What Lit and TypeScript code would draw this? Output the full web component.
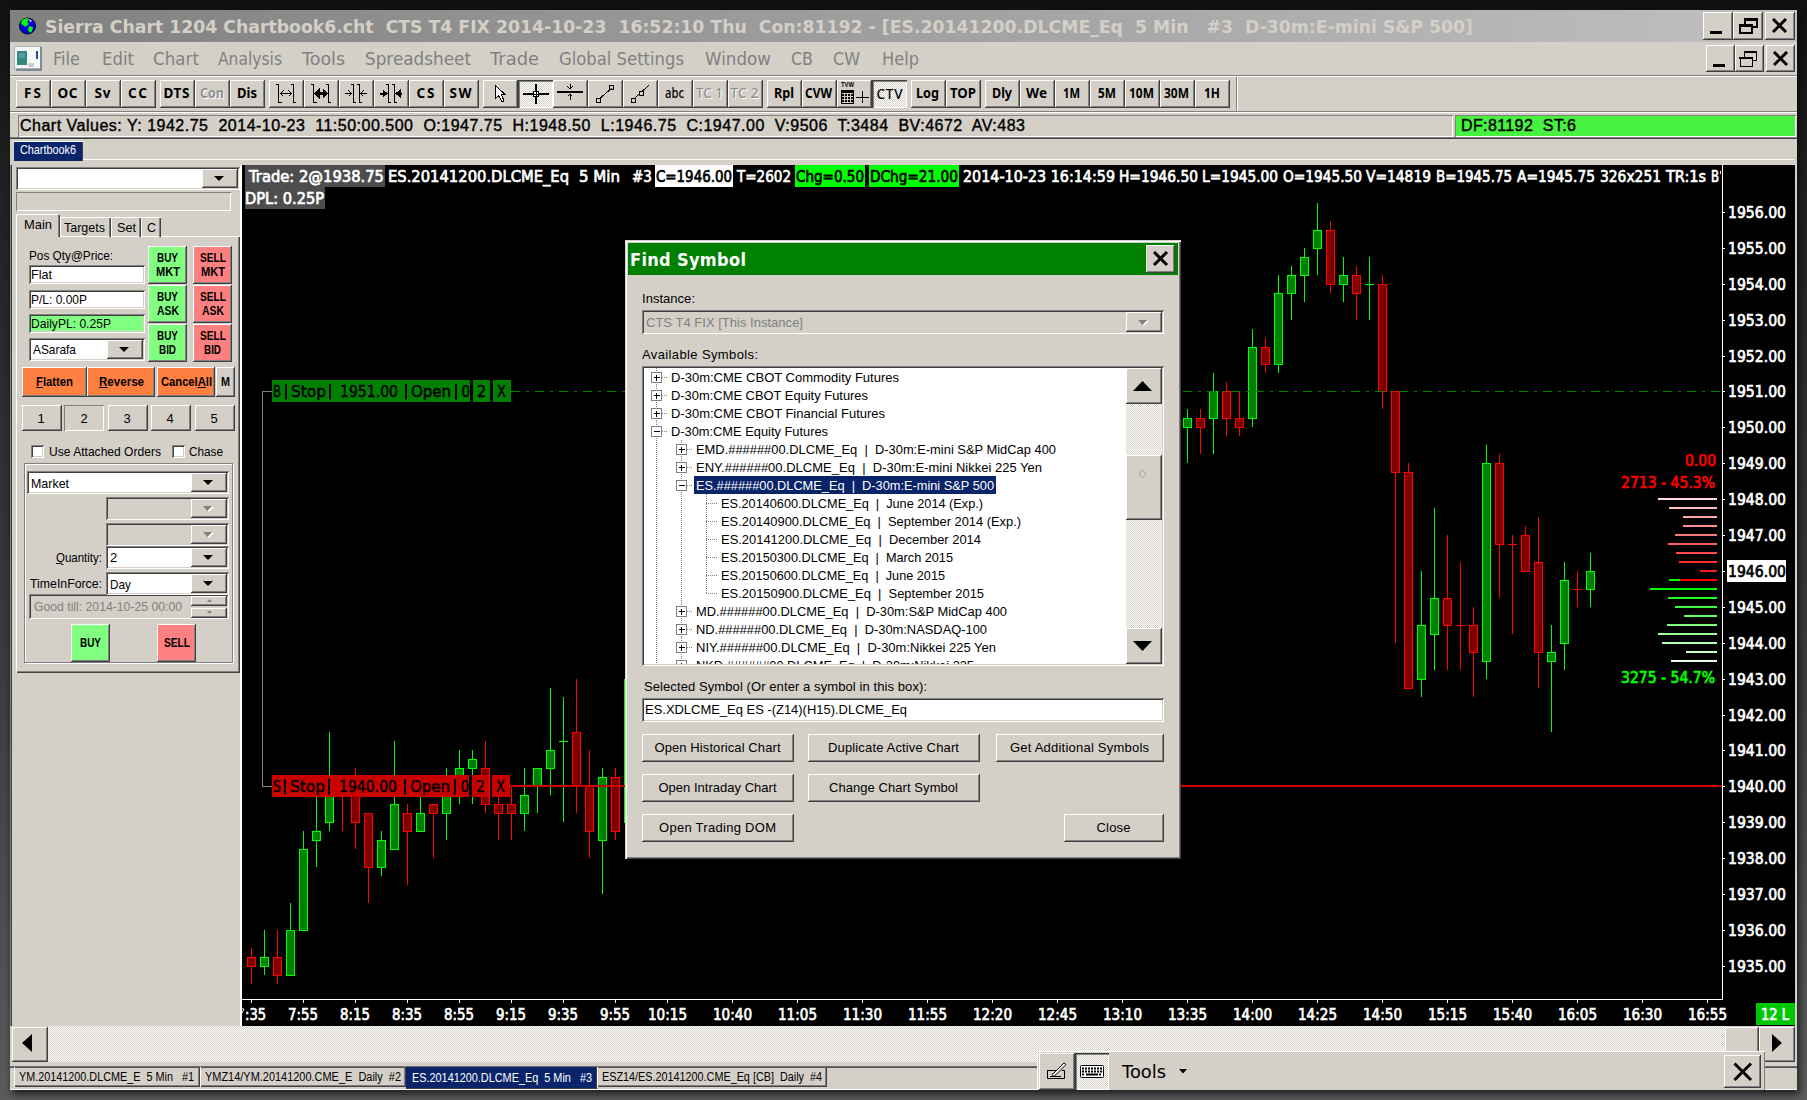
import { LitElement, html, svg, css, nothing } from "lit";
import { customElement, property } from "lit/decorators.js";
import { classMap } from "lit/directives/class-map.js";

/* Text run set to an exact advance width: tracked out when short, condensed when long. */
@customElement("fit-text")
class FitText extends LitElement {
  @property({ type: Number }) w = 0;
  static styles = css`
    :host { display: inline-block; white-space: pre; flex: none; text-align: left; }
    span { display: inline-block; white-space: pre; transform-origin: 0 50%; }
  `;
  render() {
    return html`<span><slot></slot></span>`;
  }
  firstUpdated() {
    const span = this.renderRoot.querySelector("span") as HTMLElement;
    const natural = span.getBoundingClientRect().width;
    const n = Math.max(1, (this.textContent || "").length - 1);
    if (this.w > 0) {
      if (natural > this.w) span.style.transform = `scaleX(${this.w / natural})`;
      else span.style.letterSpacing = `${(this.w - natural) / n}px`;
      this.style.width = `${this.w}px`;
    }
  }
}

const bevels = css`
  * { box-sizing: border-box; }
  .raised { background: #d4d0c8; box-shadow: inset -1px -1px #404040, inset 1px 1px #fff, inset -2px -2px #808080; }
  .sunken { box-shadow: inset 1px 1px #808080, inset -1px -1px #fff, inset 2px 2px #404040, inset -2px -2px #d4d0c8; }
  .hatch { background: conic-gradient(#fff 25%, #d4d0c8 0 50%, #fff 0 75%, #d4d0c8 0) 0 0 / 2px 2px; }
  .center { display: flex; align-items: center; justify-content: center; }
  svg { display: block; flex: none; }
`;

/* ---------- toolbar ---------- */
type Tool = { t?: string; w?: number; icon?: string; dim?: boolean; on?: boolean; light?: boolean };
const tools: Tool[][] = [
  [{ t: "FS", w: 17 }, { t: "OC", w: 20 }, { t: "Sv", w: 16 }, { t: "CC", w: 19 }],
  [{ t: "DTS", w: 26 }, { t: "Con", w: 24, dim: true }, { t: "Dis", w: 20 }],
  [{ icon: "wide" }, { icon: "widebold" }, { icon: "narrow" }, { icon: "narrowbold" }, { t: "CS", w: 18 }, { t: "SW", w: 22 }],
  [{ icon: "arrow" }, { icon: "cross", on: true }, { icon: "hline" }, { icon: "line" }, { icon: "ray" }, { t: "abc", w: 19, light: true }, { t: "TC 1", w: 27, dim: true, light: true }, { t: "TC 2", w: 28, dim: true, light: true }],
  [{ t: "Rpl", w: 20 }, { t: "CVW", w: 27 }, { icon: "tvw" }, { t: "CTV", w: 26, on: true, light: true }],
  [{ t: "Log", w: 23 }, { t: "TOP", w: 26 }],
  [{ t: "Dly", w: 20 }, { t: "We", w: 21 }, { t: "1M", w: 17 }, { t: "5M", w: 18 }, { t: "10M", w: 25 }, { t: "30M", w: 25 }, { t: "1H", w: 16 }],
];

const toolIcons: Record<string, unknown> = {
  wide: svg`<path d="M7 4.500H10M9.500 4V22M9 22.500H13M22 4.500H25M24.500 4V22M24 22.500H27M11 13.500H23"/><path d="M14.500 10.500L11.500 13.500L14.500 16.500M19.500 10.500L22.500 13.500L19.500 16.500"/>`,
  widebold: svg`<path d="M7 4.500H10M9.500 4V22M9 22.500H13M22 4.500H25M24.500 4V22M24 22.500H27"/><path fill="#000" d="M11 13.500L15 9.500V12.500H19V9.500L23 13.500L19 17.500V14.500H15V17.500Z"/>`,
  narrow: svg`<path d="M12 4.500H15M14.500 4V22M14 22.500H17M18 4.500H21M20.500 4V22M20 22.500H23M6 13.500H13M21 13.500H28"/><path d="M9.500 10.500L12.500 13.500L9.500 16.500M24.500 10.500L21.500 13.500L24.500 16.500"/>`,
  narrowbold: svg`<path d="M12 4.500H15M14.500 4V22M14 22.500H17M18 4.500H21M20.500 4V22M20 22.500H23"/><path stroke-width="2" d="M6 13.500H10M24 13.500H28"/><path fill="#000" d="M9 10L13 13.500L9 17ZM26 10L22 13.500L26 17Z"/>`,
  arrow: svg`<path fill="#fff" d="M12.500 5.500V18.500L15.500 15.500L19 22L21 21L18.500 14.500H22Z"/>`,
  cross: svg`<path stroke-width="2" d="M5 14H31M18 4V24"/><rect x="15.500" y="11.500" width="5" height="5" fill="#fff"/><path d="M18 11V17M15 14H21"/>`,
  hline: svg`<path stroke-width="2" d="M4 11.500H30"/><path d="M17 4V9M14.500 6.500L17 9L19.500 6.500M17 14V20M14.500 16.500L17 14L19.500 16.500"/>`,
  line: svg`<path d="M11 19L24 8"/><rect x="8.500" y="18.500" width="3.500" height="3.500"/><rect x="21.500" y="5.500" width="3.500" height="3.500"/>`,
  ray: svg`<path d="M11 19L26 5"/><rect x="8.500" y="18.500" width="3.500" height="3.500"/><rect x="16.500" y="11.500" width="3.500" height="3.500" fill="#d4d0c8"/>`,
  tvw: svg`<path stroke="none" fill="#000" d="M4 10H17V24H4Z"/><path stroke="#d4d0c8" d="M5 13.500H16M5 16.500H16M5 19.500H16M5 22.500H16M7.500 13V23M10.500 13V23M13.500 13V23"/><path d="M19 17H32M25.500 11V23"/>`,
};

@customElement("tool-bar")
class ToolBar extends LitElement {
  static styles = [bevels, css`
    :host { display: flex; gap: 4px; height: 34px; padding: 3px 0 4px 6px; background: #d4d0c8; font: bold 13.5px "Noto Sans", sans-serif; color: #000; }
    .group { display: flex; }
    .btn { width: 35px; height: 28px; padding: 0 2px 3px 0; position: relative; }
    .icon { padding: 0; align-items: flex-start; }
    .icon svg { fill: none; stroke: #000; shape-rendering: crispEdges; }
    .dim { color: #909090; text-shadow: 1px 1px #fff; }
    .light { font-weight: 500; }
    .on { background: conic-gradient(#fff 25%, #d4d0c8 0 50%, #fff 0 75%, #d4d0c8 0) 0 0 / 2px 2px; box-shadow: inset 1px 1px #404040, inset 2px 2px #808080, inset -1px -1px #fff; padding-right: 0; padding-bottom: 1px; }
    .tiny { position: absolute; left: 4px; top: 1px; font: bold 7px "Liberation Sans", sans-serif; }
    .end { width: 2px; height: 34px; margin: -3px 0 0 2px; background: linear-gradient(90deg, #808080 50%, #fff 50%); }
  `];
  render() {
    return html`${tools.map((g) => html`<div class="group">${g.map((b) => html`
      <div class=${classMap({ btn: true, raised: !b.on, on: !!b.on, center: true, dim: !!b.dim, light: !!b.light, icon: !!b.icon })}>
        ${b.icon === "tvw" ? html`<span class="tiny"><fit-text w="13">TVW</fit-text></span>` : nothing}
        ${b.icon ? html`<svg width="35" height="27">${toolIcons[b.icon]}</svg>` : html`<fit-text w=${b.w!}>${b.t}</fit-text>`}
      </div>`)}</div>`)}<div class="end"></div>`;
  }
}

/* ---------- trade panel ---------- */
@customElement("drop-box")
class DropBox extends LitElement {
  @property({ type: Boolean }) off = false;
  static styles = [bevels, css`
    :host { display: flex; height: 23px; background: #fff; padding: 2px; box-shadow: inset 1px 1px #808080, inset -1px -1px #fff, inset 2px 2px #404040, inset -2px -2px #d4d0c8; }
    :host([off]) { background: #d4d0c8; color: #808080; }
    .val { flex: 1; display: flex; align-items: center; padding-left: 2px; min-width: 0; }
    .btn { width: 36px; }
    svg { margin-right: 2px; }
  `];
  render() {
    return html`<div class="val"><slot></slot></div>
      <div class="btn raised center"><svg width="11" height="7">
        ${this.off ? svg`<path fill="#fff" d="M1 2H11L6 7Z"/><path fill="#808080" d="M0 1H9L4.500 6Z"/>` : svg`<path d="M0 1H10L5 6Z"/>`}
      </svg></div>`;
  }
}

@customElement("trade-panel")
class TradePanel extends LitElement {
  static styles = [bevels, css`
    :host { display: block; width: 231px; height: 861px; padding: 2px 0 0 5px; background: #d4d0c8; font: 13px "Liberation Sans", sans-serif; color: #000; border-left: 1px solid #808080; box-shadow: inset 1px 0 #404040, inset -1px 0 #fff; }
    .top { width: 224px; }
    .well { width: 215px; height: 19px; margin-top: 2px; box-shadow: inset 1px 1px #808080, inset -1px -1px #fff; }
    .tabs { display: flex; align-items: flex-end; height: 23px; margin-top: 3px; }
    .tab { height: 20px; box-shadow: inset 1px 1px #fff, inset -1px 0 #404040, inset -2px 0 #808080; display: flex; align-items: center; padding-left: 4px; }
    .tab.sel { height: 23px; width: 44px; padding: 0 0 2px 8px; border-radius: 2px 2px 0 0; }
    .body { width: 224px; height: 436px; box-shadow: inset 1px 0 #fff, inset -1px -1px #404040, inset -2px -2px #808080; padding: 10px 0 0 6px; }
    .body::before { content: ""; display: block; height: 1px; width: 180px; background: #fff; margin: -11px 0 10px 38px; }
    .pos { display: flex; padding-left: 7px; }
    .fields { width: 116px; margin-right: 3px; }
    .lab { height: 18px; display: flex; align-items: center; padding-bottom: 2px; }
    .in { height: 19px; background: #fff; display: flex; align-items: center; padding: 0 0 1px 2px; }
    .in.b { margin-top: 6px; } .in.c { margin-top: 5px; background: #80ff80; }
    .fields drop-box { margin-top: 5px; }
    .sq { display: grid; grid-template-columns: 39px 39px; column-gap: 6px; row-gap: 1px; grid-auto-rows: 38px; margin-top: -1px; }
    .big { display: flex; flex-direction: column; align-items: center; justify-content: center; line-height: 14px; font-weight: bold; font-size: 12.5px; }
    .buy { background: #80ff80; } .sell { background: #ff8080; }
    .row { display: flex; }
    .acts { margin-top: 5px; height: 30px; font-weight: bold; font-size: 12.5px; }
    .org { background: #ff8040; }
    .nums { margin-top: 8px; height: 26px; }
    .nums > div { width: 40px; padding-right: 2px; }
    .nums .down { box-shadow: inset 1px 1px #808080, inset -1px -1px #fff; padding-right: 0; }
    .checks { margin: 13px 0 0 9px; height: 14px; align-items: center; }
    .ck { width: 13px; height: 13px; background: #fff; }
    .group { width: 209px; height: 200px; margin: 5px 0 0 2px; border: 1px solid #808080; box-shadow: 1px 1px #fff, inset 1px 1px #fff; padding: 7px 3px 0 2px; }
    .group .r { display: flex; justify-content: flex-end; align-items: center; }
    .r drop-box { width: 123px; }
    .till { height: 25px; width: 200px; margin: -1px 0 0 2px; color: #808080; display: flex; justify-content: space-between; padding: 2px; align-items: center; }
    .spin { display: flex; flex-direction: column; gap: 2px; }
    .spin div { width: 36px; height: 10px; }
    .go { display: flex; gap: 47px; margin: 5px 0 0 44px; }
    .go div { width: 39px; height: 38px; }
  `];
  side(a: string, aw: number, b: string, bw: number, c: "buy" | "sell") {
    return html`<div class=${classMap({ big: true, raised: true, [c]: true })}><fit-text w=${aw}>${a}</fit-text><fit-text w=${bw}>${b}</fit-text></div>`;
  }
  render() {
    return html`
      <drop-box class="top"></drop-box>
      <div class="well"></div>
      <div class="tabs">
        <div class="tab sel"><fit-text w="28">Main</fit-text></div>
        <div class="tab" style="width:51px"><fit-text w="41">Targets</fit-text></div>
        <div class="tab" style="width:30px;padding-left:6px"><fit-text w="19">Set</fit-text></div>
        <div class="tab" style="width:20px;padding-left:6px"><fit-text w="9">C</fit-text></div>
      </div>
      <div class="body">
        <div class="pos">
          <div class="fields">
            <div class="lab"><fit-text w="84">Pos Qty@Price:</fit-text></div>
            <div class="in sunken"><fit-text w="21">Flat</fit-text></div>
            <div class="in b sunken"><fit-text w="56">P/L: 0.00P</fit-text></div>
            <div class="in c sunken"><fit-text w="80">DailyPL: 0.25P</fit-text></div>
            <drop-box><fit-text w="43">ASarafa</fit-text></drop-box>
          </div>
          <div class="sq">
            ${this.side("BUY", 21, "MKT", 24, "buy")}${this.side("SELL", 26, "MKT", 24, "sell")}
            ${this.side("BUY", 21, "ASK", 22, "buy")}${this.side("SELL", 26, "ASK", 22, "sell")}
            ${this.side("BUY", 21, "BID", 17, "buy")}${this.side("SELL", 26, "BID", 17, "sell")}
          </div>
        </div>
        <div class="row acts">
          <div class="raised org center" style="width:65px"><fit-text w="37"><u>F</u>latten</fit-text></div>
          <div class="raised org center" style="width:68px"><fit-text w="45"><u>R</u>everse</fit-text></div>
          <div class="raised org center" style="width:58px;margin-left:2px"><fit-text w="51">Cancel<u>A</u>ll</fit-text></div>
          <div class="raised center" style="width:19px;margin-left:1px"><fit-text w="9">M</fit-text></div>
        </div>
        <div class="row nums">
          ${[0, 2, 4, 3, 4].map((gap, i) => html`<div class=${classMap({ center: true, raised: i !== 1, down: i === 1 })} style="margin-left:${gap}px">${i + 1}</div>`)}
        </div>
        <div class="row checks">
          <div class="ck sunken"></div><fit-text w="112" style="margin-left:5px">Use Attached Orders</fit-text>
          <div class="ck sunken" style="margin-left:11px"></div><fit-text w="34" style="margin-left:4px">Chase</fit-text>
        </div>
        <div class="group">
          <drop-box><fit-text w="38" style="padding-top:1px">Market</fit-text></drop-box>
          <div class="r" style="margin-top:3px"><drop-box off></drop-box></div>
          <div class="r" style="margin-top:3px"><drop-box off></drop-box></div>
          <div class="r"><fit-text w="46" style="margin-right:4px"><u>Q</u>uantity:</fit-text><drop-box>2</drop-box></div>
          <div class="r" style="margin-top:3px"><fit-text w="72" style="margin-right:4px">TimeInForce:</fit-text><drop-box><fit-text w="21" style="padding-top:1px">Day</fit-text></drop-box></div>
          <div class="till sunken"><fit-text w="148" style="margin-left:3px">Good till: 2014-10-25 00:00</fit-text>
            <div class="spin">
              <div class="raised center"><svg width="5" height="3"><path fill="#808080" d="M0 3L2.500 0L5 3Z"/></svg></div>
              <div class="raised center"><svg width="5" height="3"><path fill="#808080" d="M0 0L2.500 3L5 0Z"/></svg></div>
            </div></div>
          <div class="go">
            <div class="big raised buy"><fit-text w="21">BUY</fit-text></div>
            <div class="big raised sell"><fit-text w="26">SELL</fit-text></div>
          </div>
        </div>
      </div>`;
  }
}

/* ---------- chart ---------- */
const TICK = 8.975;
const priceY = (p: number) => Math.round(391.4 + (1951 - p) * 4 * TICK);
const barX = (i: number) => 251 + 13 * i;

/* [bar index, up?, high, body top, body bottom, low] in quarter-point ticks from the base price */
type Bar = [number, number, number, number, number, number];
const early: Bar[] = [
  [0, 0, -18, -19, -20, -22], [1, 1, -16, -19, -20, -21], [2, 0, -16, -19, -21, -22], [3, 1, -13, -16, -21, -21],
  [4, 1, -5, -7, -16, -16], [5, 1, -1, -5, -6, -9], [6, 1, 6, 0, -4, -5], [7, 0, 0, 0, -1, -5],
  [8, 0, 2, 0, -4, -7], [9, 0, -3, -3, -9, -13], [10, 1, -5, -6, -9, -10], [11, 1, 5, -2, -7, -7],
  [12, 0, -2, -3, -5, -11], [13, 1, 0, -3, -5, -5], [14, 0, -2, -2, -3, -8], [15, 1, 2, 0, -3, -6],
  [16, 1, 4, 2, 0, -2], [17, 1, 4, 3, 2, -2], [18, 0, 5, 2, -2, -3], [19, 0, 0, -2, -3, -6],
  [20, 0, 0, -2, -3, -6], [21, 1, 2, -1, -3, -5], [22, 1, 2, 2, 0, -3], [23, 1, 11, 4, 2, -1],
  [24, 1, 10, 5, 5, -4], [25, 0, 12, 6, 0, -3], [26, 0, 4, 0, -5, -8], [27, 1, 2, 1, -6, -12],
  [28, 0, 2, 1, -5, -6], [29, 1, 12, 12, -4, -4],
];
const late: Bar[] = [
  [72, 1, -2, -3, -4, -8], [73, 0, -2, -3, -4, -7], [74, 1, 2, 0, -3, -7], [75, 0, 1, 0, -3, -5],
  [76, 0, 0, -3, -4, -5], [77, 1, 7, 5, -3, -4], [78, 0, 6, 5, 3, 2], [79, 1, 13, 11, 3, 2],
  [80, 1, 14, 13, 11, 8], [81, 1, 16, 15, 13, 10], [82, 1, 21, 18, 16, 13], [83, 0, 19, 18, 12, 11],
  [84, 1, 15, 13, 12, 10], [85, 0, 14, 13, 11, 8], [86, 1, 15, 12, 12, 8], [87, 0, 13, 12, 0, -2],
  [88, 0, 0, 0, -9, -28], [89, 0, -8, -9, -33, -33], [90, 1, -20, -26, -32, -34], [91, 1, -13, -23, -27, -31],
  [92, 0, -16, -23, -26, -31], [93, 0, -19, -26, -26, -31], [94, 0, -24, -26, -29, -34], [95, 1, -6, -8, -30, -32],
  [96, 0, -7, -8, -17, -23], [97, 0, -16, -17, -17, -27], [98, 0, -15, -16, -20, -20], [99, 0, -14, -19, -29, -33],
  [100, 1, -26, -29, -30, -38], [101, 1, -19, -21, -28, -31], [102, 0, -20, -22, -22, -24], [103, 1, -18, -20, -22, -24],
];
const times: [number, string][] = [
  [251, "7:35"], [303, "7:55"], [355, "8:15"], [407, "8:35"], [459, "8:55"], [511, "9:15"], [563, "9:35"], [615, "9:55"],
  [667, "10:15"], [732, "10:40"], [797, "11:05"], [862, "11:30"], [927, "11:55"], [992, "12:20"], [1057, "12:45"],
  [1122, "13:10"], [1187, "13:35"], [1252, "14:00"], [1317, "14:25"], [1382, "14:50"], [1447, "15:15"], [1512, "15:40"],
  [1577, "16:05"], [1642, "16:30"], [1707, "16:55"],
];
const depth: [number, string][] = [
  [1658, "#ffd8dc"], [1669, "#ffc0c0"], [1683, "#ffa8a8"], [1683, "#ff9090"], [1675, "#ff7878"], [1668, "#ff6060"],
  [1676, "#ff4848"], [1679, "#ff3030"], [1700, "#ff1818"], [1680, "#ff0000"], [1650, "#00ff00"], [1668, "#20f820"],
  [1675, "#40fc40"], [1684, "#60ff60"], [1667, "#80ff80"], [1658, "#98ff98"], [1662, "#b0ffb0"], [1686, "#c8ffc8"], [1671, "#e4ffe4"],
];

@customElement("price-chart")
class PriceChart extends LitElement {
  static styles = css`
    :host { display: block; width: 1554px; height: 861px; background: #000; }
    svg { display: block; }
    text { font: 15px "DejaVu Sans", sans-serif; fill: #fff; stroke: #fff; stroke-width: 0.7px; white-space: pre; }
    .ink { fill: #000; stroke: #000; }
    .red { fill: #f00; stroke: #f00; }
    .grn { fill: #0f0; stroke: #0f0; }
    .thin { stroke-width: 0.5px; }
    g { shape-rendering: crispEdges; }
  `;
  bar(base: number, [i, up, h, t, b, l]: Bar) {
    const y = (k: number) => priceY(base + k / 4);
    const x = barX(i);
    const line = up ? "#00ff00" : "#ff0000";
    return svg`<rect x=${x} y=${y(h)} width="1" height=${y(l) - y(h)} fill=${line}/>
      ${t === b ? svg`<rect x=${x - 4} y=${y(t)} width="9" height="1" fill=${line}/>`
        : svg`<rect x=${x - 3.5} y=${y(t) + 0.5} width="8" height=${y(b) - y(t)} fill=${up ? "#008000" : "#800000"} stroke=${line}/>`}`;
  }
  t(x1: number, x2: number, y: number, s: string, cls = "") {
    return svg`<text class=${cls} x=${x1} y=${y} textLength=${x2 - x1} lengthAdjust="spacingAndGlyphs">${s}</text>`;
  }
  order(y: number, dx: number, color: string, side: string, price: string) {
    const base = y + 5.5;
    return svg`<g fill=${color}><rect x="272" y=${y - 11} width=${198 + dx} height="22"/><rect x=${473 + dx} y=${y - 11} width="17" height="22"/><rect x=${493 + dx} y=${y - 11} width="18" height="22"/></g>
      ${this.t(273, 281, base, side, "ink thin")}
      <path d="M${286 + dx} ${y - 7}v15.500M${330 + dx} ${y - 7}v15.500M${406 + dx} ${y - 7}v15.500M${456 + dx} ${y - 7}v15.500" stroke="#000" stroke-width="2"/>
      ${this.t(291 + dx, 326 + dx, base, "Stop", "ink thin")}${this.t(340 + dx, 398 + dx, base, price, "ink thin")}
      ${this.t(411 + dx, 451 + dx, base, "Open", "ink thin")}${this.t(461.5 + dx, 470 + dx, base, "0", "ink thin")}
      ${this.t(477 + dx, 486 + dx, base, "2", "ink thin")}${this.t(497 + dx, 506 + dx, base, "X", "ink thin")}`;
  }
  render() {
    const prices = Array.from({ length: 22 }, (_, i) => 1956 - i);
    return html`<svg width="1554" height="861" viewBox="241 165 1554 861">
      <g>
        ${early.map((b) => this.bar(1940, b))}
        ${late.map((b) => this.bar(1951, b))}
        <path d="M511 391.500H1720" stroke="#008000" stroke-dasharray="9 6 3 6"/>
        <path d="M510 786H1722" stroke="#c80000" stroke-width="2"/>
        <path d="M272 391.500H262.500V786.500H272" fill="none" stroke="#808080"/>
        <rect x="245" y="165" width="140" height="22" fill="#4d4d4d"/><rect x="245" y="187" width="80" height="22" fill="#4d4d4d"/>
        <rect x="655" y="165" width="78" height="22" fill="#fff"/>
        <rect x="795" y="165" width="70" height="22" fill="#0f0"/><rect x="869" y="165" width="90" height="22" fill="#0f0"/>
        ${depth.map(([x, c], k) => {
          const y = priceY(1948 - k / 4);
          return svg`<rect x=${x} y=${y - 1} width=${1717 - x} height="2" fill=${c}/>${k === 9 ? svg`<rect x="1669" y=${y - 1} width="11" height="2" fill="#0f0"/>` : nothing}`;
        })}
        <path d="M241.500 165V1026M241 999.500H1723M1722.500 165V999" stroke="#fff"/>
        ${prices.map((p) => svg`<rect x="1723" y=${priceY(p)} width="2" height="1" fill="#fff"/>`)}
        ${times.map(([x]) => svg`<rect x=${x} y="1000" width="1" height="3" fill="#fff"/>`)}
        <rect x="1727" y="560" width="59" height="22" fill="#fff"/>
        <rect x="1756" y="1003" width="39" height="22" fill="#00c800"/>
      </g>
      ${this.order(391, 0, "#008000", "B", "1951.00")}
      ${this.order(786, -1, "#c80000", "S", "1940.00")}
      ${this.t(249, 384, 182, "Trade: 2@1938.75")}
      ${this.t(245, 324, 204, "DPL: 0.25P")}
      ${this.t(388, 569, 182, "ES.20141200.DLCME_Eq")}${this.t(579, 620, 182, "5 Min")}${this.t(632, 652, 182, "#3")}
      ${this.t(656, 732, 182, "C=1946.00", "ink")}${this.t(737, 791, 182, "T=2602")}
      ${this.t(796, 864, 182, "Chg=0.50", "ink")}${this.t(870, 958, 182, "DChg=21.00", "ink")}
      ${this.t(963, 1115, 182, "2014-10-23 16:14:59")}${this.t(1119, 1198, 182, "H=1946.50")}
      ${this.t(1202, 1278, 182, "L=1945.00")}${this.t(1283, 1362, 182, "O=1945.50")}${this.t(1366, 1431, 182, "V=14819")}
      ${this.t(1436, 1512, 182, "B=1945.75")}${this.t(1517, 1595, 182, "A=1945.75")}${this.t(1600, 1661, 182, "326x251")}
      ${this.t(1666, 1706, 182, "TR:1s")}${this.t(1711, 1719, 182, "B")}<path d="M1720.500 171V174" stroke="#fff"/>
      ${prices.map((p) => this.t(1728, 1786, priceY(p) + 6, p.toFixed(2), p === 1946 ? "ink" : ""))}
      ${times.map(([x, s], i) => i === 0
        ? svg`<path d="M242 1009H244L242 1013" stroke="#fff" fill="none"/>${this.t(245, 266, 1020, ":35")}`
        : s.length === 4 ? this.t(x - 15, x + 15, 1020, s) : this.t(x - 19, x + 20, 1020, s))}
      ${this.t(1685, 1716, 466, "0.00", "red")}${this.t(1621, 1715, 488, "2713 - 45.3%", "red")}${this.t(1621, 1715, 683, "3275 - 54.7%", "grn")}
      ${this.t(1761, 1789, 1020, "12 L")}
    </svg>`;
  }
}

/* ---------- dialog ---------- */
type Node = { d: number; s: string; w: number; m?: string; sel?: boolean; last?: boolean };
const tree: Node[] = [
  { d: 0, s: "D-30m:CME CBOT Commodity Futures", w: 228, m: "+" },
  { d: 0, s: "D-30m:CME CBOT Equity Futures", w: 197, m: "+" },
  { d: 0, s: "D-30m:CME CBOT Financial Futures", w: 214, m: "+" },
  { d: 0, s: "D-30m:CME Equity Futures", w: 157, m: "-" },
  { d: 1, s: "EMD.######00.DLCME_Eq  |  D-30m:E-mini S&P MidCap 400", w: 360, m: "+" },
  { d: 1, s: "ENY.######00.DLCME_Eq  |  D-30m:E-mini Nikkei 225 Yen", w: 346, m: "+" },
  { d: 1, s: "ES.######00.DLCME_Eq  |  D-30m:E-mini S&P 500", w: 298, m: "-", sel: true },
  { d: 2, s: "ES.20140600.DLCME_Eq  |  June 2014 (Exp.)", w: 262 },
  { d: 2, s: "ES.20140900.DLCME_Eq  |  September 2014 (Exp.)", w: 300 },
  { d: 2, s: "ES.20141200.DLCME_Eq  |  December 2014", w: 260 },
  { d: 2, s: "ES.20150300.DLCME_Eq  |  March 2015", w: 232 },
  { d: 2, s: "ES.20150600.DLCME_Eq  |  June 2015", w: 224 },
  { d: 2, s: "ES.20150900.DLCME_Eq  |  September 2015", w: 263, last: true },
  { d: 1, s: "MD.######00.DLCME_Eq  |  D-30m:S&P MidCap 400", w: 311, m: "+" },
  { d: 1, s: "ND.######00.DLCME_Eq  |  D-30m:NASDAQ-100", w: 291, m: "+" },
  { d: 1, s: "NIY.######00.DLCME_Eq  |  D-30m:Nikkei 225 Yen", w: 300, m: "+" },
  { d: 1, s: "NKD.######00.DLCME_Eq  |  D-30m:Nikkei 225", w: 278, m: "+" },
];

@customElement("find-symbol")
class FindSymbol extends LitElement {
  static styles = [bevels, css`
    :host { display: block; width: 556px; height: 619px; background: #d4d0c8; padding: 3px; font: 13px "Liberation Sans", sans-serif; color: #000; box-shadow: inset 1px 1px #d4d0c8, inset 2px 2px #fff, inset -1px -1px #404040, inset -2px -2px #808080; }
    .bar { height: 32px; background: #008000; color: #fff; display: flex; justify-content: space-between; padding: 2px 3px 0 2px; font: bold 18px "DejaVu Sans Condensed", "DejaVu Sans", sans-serif; font-stretch: condensed; }
    .bar fit-text { padding-top: 4px; }
    .x { width: 29px; height: 28px; }
    .main { padding: 14px 14px 0 14px; }
    .lab { height: 19px; line-height: 20px; }
    drop-box { height: 24px; margin-top: 2px; }
    .l2 { margin-top: 11px; height: 21px; line-height: 20px; }
    .tree { height: 300px; background: #fff; padding: 2px; display: flex; }
    .rows { flex: 1; overflow: hidden; }
    .node { height: 18px; display: flex; align-items: center; white-space: pre; }
    .node .tx { height: 18px; line-height: 19px; padding: 0 2px; }
    .sel .tx { background: #0a246a; color: #fff; }
    .node svg { shape-rendering: crispEdges; }
    .sb { width: 36px; display: flex; flex-direction: column; }
    .sb div { flex: none; }
    .arr { height: 36px; padding: 0 3px 2px 0; }
    .l3 { margin: 12px 0 0 2px; height: 20px; line-height: 18px; }
    .in { height: 24px; background: #fff; display: flex; align-items: center; padding: 0 0 1px 3px; }
    .btns { display: grid; grid-template-columns: 152px 174px 168px; column-gap: 14px; row-gap: 12px; grid-auto-rows: 28px; margin-top: 12px; }
    .btns div { padding: 0 1px 1px 0; }
    .mid { width: 172px; }
    .close { grid-column: 3; grid-row: 3; width: 100px; justify-self: end; }
    .r2 { grid-column: 1; }
  `];
  guides(n: Node, i: number) {
    const w = 24 + 25 * n.d;
    const cx = 12 + 25 * n.d;
    const dots = "1 1";
    return svg`
      <path d="M12.500 0V18" stroke="#808080" stroke-dasharray=${dots}/>
      ${i >= 4 ? svg`<path d="M37.500 0V18" stroke="#808080" stroke-dasharray=${dots}/>` : nothing}
      ${n.d === 2 ? svg`<path d="M62.500 0V${n.last ? 9 : 18}M62 9.500H74" stroke="#808080" stroke-dasharray=${dots}/>` : nothing}
      ${n.m ? svg`<path d="M${cx + 6} 9.500H${w}" stroke="#808080" stroke-dasharray=${dots}/>
        <rect x=${cx - 4.5} y="4.500" width="10" height="10" fill="#fff" stroke="#808080"/>
        <path d="M${cx - 2} 9.500h6" stroke="#000"/>${n.m === "+" ? svg`<path d="M${cx + 0.5} 6.500v6" stroke="#000"/>` : nothing}` : nothing}`;
  }
  render() {
    const arrow = (d: string) => html`<div class="raised center arr"><svg width="19" height="11"><path d=${d}/></svg></div>`;
    return html`
      <div class="bar"><fit-text w="116">Find Symbol</fit-text>
        <div class="x raised center"><svg width="16" height="16"><path d="M1 1L14 14M14 1L1 14" stroke="#000" stroke-width="3"/></svg></div></div>
      <div class="main">
        <div class="lab"><fit-text w="53">Instance:</fit-text></div>
        <drop-box off><fit-text w="157">CTS T4 FIX [This Instance]</fit-text></drop-box>
        <div class="l2"><fit-text w="116">Available Symbols:</fit-text></div>
        <div class="tree sunken">
          <div class="rows">${tree.map((n, i) => html`<div class=${classMap({ node: true, sel: !!n.sel })}>
            <svg width=${25 + 25 * n.d} height="18">${this.guides(n, i)}</svg><span class="tx"><fit-text w=${n.w}>${n.s}</fit-text></span></div>`)}</div>
          <div class="sb hatch">
            ${arrow("M0 11L9.500 1L19 11Z")}
            <div style="height:51px"></div>
            <div class="raised" style="height:65px"><svg width="36" height="40"><path d="M16.500 15L20 19L16.500 23L13 19Z" fill="none" stroke="#a8a49c"/></svg></div>
            <div style="height:108px"></div>
            ${arrow("M0 1H19L9.500 11Z")}
          </div>
        </div>
        <div class="l3"><fit-text w="283">Selected Symbol (Or enter a symbol in this box):</fit-text></div>
        <div class="in sunken"><fit-text w="262">ES.XDLCME_Eq ES -(Z14)(H15).DLCME_Eq</fit-text></div>
        <div class="btns">
          <div class="raised center"><fit-text w="126">Open Historical Chart</fit-text></div>
          <div class="raised center mid"><fit-text w="131">Duplicate Active Chart</fit-text></div>
          <div class="raised center"><fit-text w="139">Get Additional Symbols</fit-text></div>
          <div class="raised center r2"><fit-text w="118">Open Intraday Chart</fit-text></div>
          <div class="raised center mid"><fit-text w="129">Change Chart Symbol</fit-text></div>
          <div class="raised center r2"><fit-text w="117">Open Trading DOM</fit-text></div>
          <div class="raised center close"><fit-text w="34">Close</fit-text></div>
        </div>
      </div>`;
  }
}

/* ---------- application ---------- */
const menus: [string, number, number][] = [
  ["File", 27, 53], ["Edit", 32, 102], ["Chart", 46, 153], ["Analysis", 64, 218], ["Tools", 43, 302], ["Spreadsheet", 106, 365],
  ["Trade", 49, 490], ["Global Settings", 125, 559], ["Window", 66, 705], ["CB", 22, 791], ["CW", 27, 833], ["Help", 37, 882],
];

@customElement("app-root")
class AppRoot extends LitElement {
  static styles = [bevels, css`
    :host { display: block; width: 1807px; height: 1100px; padding: 10px; background: linear-gradient(#111 0%, #202020 15%, #3c3c3c 60%, #5c5c5c 100%); overflow: hidden; font-family: "Liberation Sans", sans-serif; box-sizing: border-box; }
    .win { width: 1787px; height: 1080px; display: flex; flex-direction: column; background: #d4d0c8; position: relative; box-shadow: 2px 4px 8px rgba(0, 0, 0, 0.7); }
    .title { height: 32px; background: linear-gradient(90deg, #808080, #c0c0c0); display: flex; align-items: center; padding: 0 2px 0 9px; color: #d4d0c8; font: bold 18px "DejaVu Sans", sans-serif; }
    .title fit-text { margin-left: 9px; }
    .menu { height: 33px; display: flex; align-items: center; padding: 0 2px 0 4px; color: #808080; font: 18px "DejaVu Sans", sans-serif; }
    .ctl { display: flex; margin-left: auto; }
    .ctl div { width: 30px; height: 28px; }
    .ctl .min { padding-right: 4px; }
    .ctl .gap { margin-left: 2px; }
    .menu .ctl div { width: 29px; height: 27px; }
    .menu .ctl .res { padding-right: 3px; }
    .sep { height: 2px; background: linear-gradient(#808080 50%, #fff 50%); }
    .status { height: 24px; display: flex; gap: 2px; padding: 2px 1px 0 8px; font-size: 16px; -webkit-text-stroke: 0.4px #000; }
    .cell { height: 22px; box-shadow: inset 1px 1px #808080, inset -1px -1px #fff; display: flex; align-items: center; }
    .feed { flex: 1; background: #48f040; padding-left: 6px; }
    .books { height: 28px; border-top: 1px solid #808080; box-shadow: inset 0 1px #404040; padding: 3px 0 0 4px; background: linear-gradient(#fff, #fff) 4px 21px / 1780px 1px no-repeat; }
    .book { width: 69px; height: 20px; background: #0a246a; color: #fff; font-size: 13px; display: flex; align-items: center; padding: 0 0 4px 6px; box-shadow: inset 0 1px #fff, inset -1px 0 #404040; }
    .mid { display: flex; height: 861px; }
    .edge { width: 1px; background: #d4d0c8; }
    .hs { height: 36px; display: flex; padding: 0 2px; }
    .hs .arr { width: 36px; height: 35px; margin-top: 1px; padding-bottom: 2px; }
    .hs .left { padding-right: 6px; }
    .hs .track { flex: 1; }
    .hs .thumb { width: 34px; height: 35px; margin-top: 1px; }
    .sheets { height: 28px; display: flex; padding: 5px 0 0 4px; font-size: 12px; background: linear-gradient(#808080, #404040) 0 4px / 100% 2px no-repeat; box-shadow: inset 0 -1px #fff; }
    .sheet { height: 20px; display: flex; align-items: center; padding-left: 5px; box-shadow: inset 1px 0 #fff, inset -1px -1px #404040, inset -2px -2px #808080; }
    .sheet.sel { height: 22px; background: #0a246a; color: #fff; padding-left: 6px; box-shadow: inset -1px -1px #404040; }
    find-symbol { position: absolute; left: 615px; top: 230px; }
    .ink { position: absolute; left: 1027px; top: 1041px; width: 728px; height: 39px; background: #d4d0c8; box-shadow: inset 1px 1px #fff, inset -1px 0 #808080; display: flex; align-items: center; padding: 2px 4px 0 2px; font: 18px "DejaVu Sans", sans-serif; color: #000; }
    .ink .b { width: 36px; height: 37px; }
    .ink .p { width: 34px; box-shadow: inset 1px 1px #404040, inset 2px 2px #808080, inset -1px -1px #fff; }
    .ink .c { width: 37px; height: 33px; margin-left: auto; }
  `];
  ctl(small: boolean) {
    const sw = small ? 2 : 3;
    const back = small ? 1 : 2;
    return html`<div class="ctl">
      <div class="raised center min"><svg width="18" height="18"><rect x="3" y="14" width="12" height="3"/></svg></div>
      <div class="raised center res"><svg width="20" height="18" fill="none" stroke="#000" shape-rendering="crispEdges">
        <rect x="6.500" y="2" width="12" height="8" stroke-width=${back}/><path d="M6 2H19" stroke-width=${sw}/>
        <rect x="2" y="8" width="12" height="8" fill="#d4d0c8" stroke-width=${back}/><path d="M1 8H15" stroke-width=${sw}/></svg></div>
      <div class="raised center gap"><svg width="16" height="16"><path d="M1 1L14 14M14 1L1 14" stroke="#000" stroke-width="3"/></svg></div>
    </div>`;
  }
  render() {
    let x = 43;
    return html`<div class="win">
      <div class="title">
        <svg width="17" height="18"><circle cx="8.500" cy="9" r="8" fill="#0000e0" stroke="#000"/><path fill="#0f0" d="M3 3L8 1L10 2L8 5L10 7L6 10L4 8L2 7ZM10 9L14 10L13 14L11 16L9 13Z"/><path fill="#fff" d="M10 2L13 4L11 5Z"/></svg>
        <fit-text w="1428">Sierra Chart 1204 Chartbook6.cht  CTS T4 FIX 2014-10-23  16:52:10 Thu  Con:81192 - [ES.20141200.DLCME_Eq  5 Min   #3  D-30m:E-mini S&P 500]</fit-text>
        ${this.ctl(false)}
      </div>
      <div class="menu">
        <svg width="28" height="25"><rect x="0.500" y="0.500" width="26" height="22" fill="#f4f8f8" stroke="#a8b0b8"/><rect x="3" y="5" width="10" height="14" fill="#388878"/><rect x="5" y="7" width="6" height="5" fill="#50a0a8"/><rect x="14" y="17" width="6" height="4" fill="#d0d0d0"/><rect x="22" y="5" width="2" height="8" fill="#2848a0"/><path d="M27 1V24H2" stroke="#808890" fill="none" stroke-width="2"/></svg>
        ${menus.map(([s, w, at]) => {
          const gap = at - (x - 1);
          x = at + w + 1;
          return html`<fit-text w=${w} style="margin-left:${gap}px">${s}</fit-text>`;
        })}
        ${this.ctl(true)}
      </div>
      <div class="sep"></div>
      <tool-bar></tool-bar>
      <div class="sep"></div>
      <div class="status">
        <div class="cell" style="width:1435px;padding-left:2px"><fit-text w="1005">Chart Values: Y: 1942.75  2014-10-23  11:50:00.500  O:1947.75  H:1948.50  L:1946.75  C:1947.00  V:9506  T:3484  BV:4672  AV:483</fit-text></div>
        <div class="cell feed"><fit-text w="115">DF:81192  ST:6</fit-text></div>
      </div>
      <div class="books"><div class="book"><fit-text w="56">Chartbook6</fit-text></div></div>
      <div class="mid"><trade-panel></trade-panel><price-chart></price-chart><div class="edge"></div></div>
      <div class="hs">
        <div class="arr left raised center"><svg width="10" height="19"><path d="M10 0V18L0 9Z"/></svg></div>
        <div class="track hatch"></div>
        <div class="thumb raised"></div>
        <div class="arr raised center"><svg width="10" height="19"><path d="M0 0V18L10 9Z"/></svg></div>
      </div>
      <div class="sheets">
        <div class="sheet" style="width:186px"><fit-text w="175">YM.20141200.DLCME_E  5 Min   #1</fit-text></div>
        <div class="sheet" style="width:206px"><fit-text w="196">YMZ14/YM.20141200.CME_E  Daily  #2</fit-text></div>
        <div class="sheet sel" style="width:191px"><fit-text w="180">ES.20141200.DLCME_Eq  5 Min   #3</fit-text></div>
        <div class="sheet" style="width:230px"><fit-text w="220">ESZ14/ES.20141200.CME_Eq [CB]  Daily  #4</fit-text></div>
      </div>
      <find-symbol></find-symbol>
      <div class="ink">
        <div class="b raised center"><svg width="22" height="20" fill="none" stroke="#000"><path d="M1.500 8.500H11M1.500 8V16.500H18.500V8.500H16" /><path d="M6 12.500L8 14.500L20 2.500L18 1L8 11Z" fill="#fff"/><path d="M4 14.500H15"/></svg></div>
        <div class="b p hatch center"><svg width="24" height="14"><rect x="0.500" y="0.500" width="23" height="12" rx="1" fill="#fff" stroke="#000"/><path d="M2 3.500H22M2 6.500H22M2 9.500H5M19 9.500H22" stroke="#000" stroke-width="2" stroke-dasharray="2 1"/><path d="M6 9.500H18" stroke="#000" stroke-width="2"/></svg></div>
        <fit-text w="44" style="margin-left:13px">Tools</fit-text>
        <svg width="8" height="5" style="margin-left:13px"><path d="M0 0H8L4 4.500Z"/></svg>
        <div class="c raised center"><svg width="20" height="20"><path d="M1.500 1.500L18 18M18 1.500L1.500 18" stroke="#000" stroke-width="3"/></svg></div>
      </div>
    </div>`;
  }
}
